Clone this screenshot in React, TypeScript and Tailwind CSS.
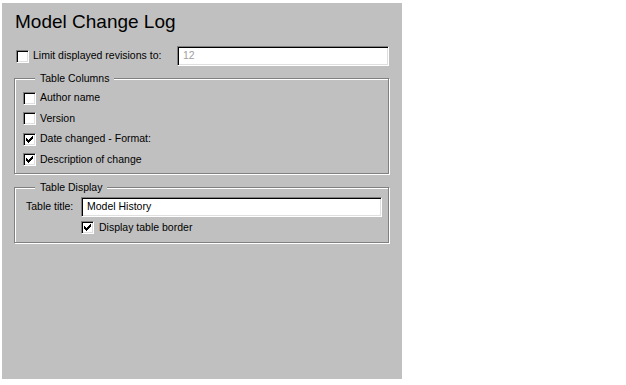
import type { ReactNode } from 'react';

const font = { fontFamily: '"Liberation Sans", Arial, sans-serif' };

// Win9x 7x7 check glyph, row by row: [x, width]
const CHECK_ROWS: [number, number][][] = [
  [[6, 1]],
  [[5, 2]],
  [[0, 1], [4, 3]],
  [[0, 2], [3, 3]],
  [[0, 5]],
  [[1, 3]],
  [[2, 1]],
];

const Checkbox = ({ checked }: { checked?: boolean }) => (
  <div className="w-[13px] h-[13px] shrink-0 bg-white border border-[#808080] border-b-white border-r-white shadow-[inset_1px_1px_0_#000,inset_-1px_-1px_0_#dfdfdf] flex items-center justify-center">
    {checked && (
      <svg width="7" height="7" viewBox="0 0 7 7" shapeRendering="crispEdges">
        {CHECK_ROWS.map((row, y) =>
          row.map(([x, w]) => <rect key={`${y}-${x}`} x={x} y={y} width={w} height={1} fill="#000" />)
        )}
      </svg>
    )}
  </div>
);

const TextBox = ({ value, disabled, className }: { value: string; disabled?: boolean; className?: string }) => (
  <div
    className={`h-[20px] bg-white border border-[#808080] border-b-white border-r-white shadow-[inset_1px_1px_0_#000,inset_-1px_-1px_0_#dfdfdf] flex items-center pl-[5px] ${
      disabled ? 'text-[#a0a0a0]' : 'text-black'
    } ${className ?? ''}`}
  >
    {value}
  </div>
);

const CheckRow = ({ label, checked }: { label: string; checked?: boolean }) => (
  <div className="h-[20.5px] flex items-center gap-[4px]">
    <Checkbox checked={checked} />
    <span>{label}</span>
  </div>
);

const Group = ({ title, className, children }: { title: string; className?: string; children: ReactNode }) => (
  <div
    className={`relative border border-[#808080] shadow-[inset_1px_1px_0_#fff,1px_1px_0_#fff] ${className ?? ''}`}
  >
    <span className="absolute -top-[8px] left-[20px] px-[5px] bg-[#c0c0c0] leading-[14px]">{title}</span>
    {children}
  </div>
);

export default function App() {
  return (
    <div className="bg-white w-[626px] h-[385px] pt-[3px] pl-[2px]" style={font}>
      <div className="w-[400px] h-[376px] bg-[#c0c0c0] pt-[8px] pl-[12px] pr-[13px] text-[10.5px] text-black">
        <h1 className="ml-[1px] text-[19px] leading-[22px]">Model Change Log</h1>

        <div className="mt-[13px] h-[20px] flex items-center">
          <div className="ml-[2px] flex items-center gap-[4px]">
            <Checkbox />
            <span>Limit displayed revisions to:</span>
          </div>
          <TextBox value="12" disabled className="ml-auto w-[212px]" />
        </div>

        <Group title="Table Columns" className="mt-[12px] pt-[9px] pb-[3px] pl-[8px]">
          <CheckRow label="Author name" />
          <CheckRow label="Version" />
          <CheckRow label="Date changed - Format:" checked />
          <CheckRow label="Description of change" checked />
        </Group>

        <Group title="Table Display" className="mt-[13px] pt-[9px] pb-[7px] pl-[11px] pr-[6px]">
          <div className="flex items-center">
            <span className="w-[55px]">Table title:</span>
            <TextBox value="Model History" className="flex-1" />
          </div>
          <div className="mt-[3px] ml-[55px] h-[15px] flex items-center gap-[5px]">
            <Checkbox checked />
            <span>Display table border</span>
          </div>
        </Group>
      </div>
    </div>
  );
}
